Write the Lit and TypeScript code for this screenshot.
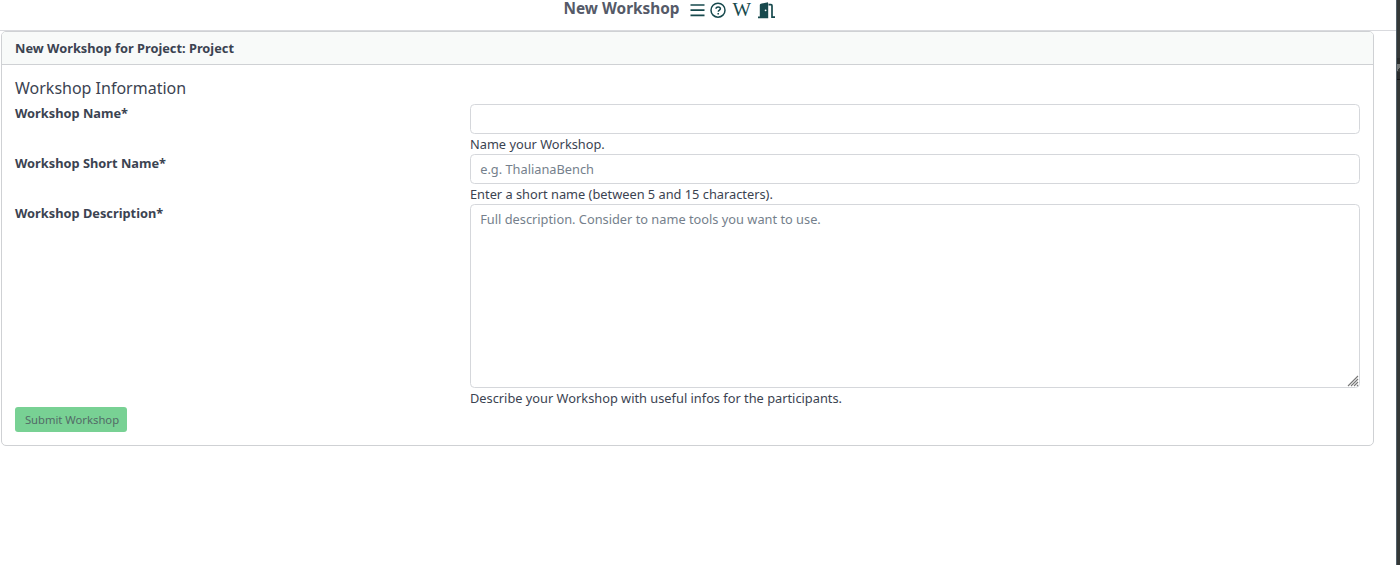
import { LitElement, html, css } from "lit";
import { customElement } from "lit/decorators.js";

@customElement("app-root")
export class AppRoot extends LitElement {
  static styles = css`
    :host { display: flex; height: 565px; overflow: hidden; background: #fff; color: #3b4351;
      font: 12.8px/20px "Noto Sans", sans-serif; }
    * { box-sizing: border-box; }
    main { flex: 1; min-width: 0; }
    .top { height: 31px; border-bottom: 1px solid #d9dade; display: flex; padding-left: 563.5px; }
    h1 { margin: -2px 0 0; font-size: 15.36px; line-height: 22px; font-weight: 700; color: #555a68; flex: 0 0 126.5px; white-space: nowrap; }
    .icons { color: #17494d; height: 20px; }
    .card { margin-left: 1px; width: 1373px; height: 415px; border: 1px solid #cfd1d4; border-radius: 5px; overflow: hidden; }
    .head { height: 33px; background: #f8faf9; border-bottom: 1px solid #cfd1d4; padding: 6px 13px; font-weight: 700; }
    .body { padding: 13px; }
    h2 { margin: 0; height: 26px; font-size: 16px; line-height: 20px; font-weight: 400; }
    .row { display: grid; grid-template-columns: 455px 890px; }
    label { font-weight: 700; line-height: 18px; }
    input, textarea { display: block; width: 100%; margin: 0; height: 30px; padding: 4px 9.2px; border: 1px solid #d5d7db; border-radius: 4.5px;
      font: inherit; color: inherit; background: #fff; outline: none; }
    textarea { height: 184px; resize: none; }
    .area { position: relative; }
    .grip { position: absolute; right: 1px; bottom: 1px; color: #777; }
    ::placeholder { color: #757f8c; opacity: 1; }
    .help { height: 20px; }
    button { display: block; height: 25px; width: 112px; margin: -1px 0 0; padding: 0 0 0 2px; border: 0; border-radius: 3px;
      background: #78d194; color: #536b67; font: 11.25px/25px "Noto Sans", sans-serif; }
    .edge { width: 4px; background: #343837; border-left: 1px solid #52606a; }
    .seam { height: 22px; margin-top: 58px; background: #292c2b; border-bottom: 1px solid #151717; padding-top: 6px; }
    .mark { height: 8px; width: 3px; background: linear-gradient(120deg, #777a79 60%, #353938 60%); }
    .w { font: 18.5px "Liberation Serif", serif; fill: currentColor; }
  `;

  private row(id: string, label: string, field: unknown, help: string) {
    return html`<div class="row"><label for=${id}>${label}</label>
      <div>${field}<div class="help">${help}</div></div></div>`;
  }

  render() {
    return html`
      <main>
        <header class="top">
          <h1>New Workshop</h1>
          <svg class="icons" width="86" height="20" viewBox="690 0 86 20" fill="none" stroke="currentColor" stroke-width="1.7">
            <path d="M690.5 5h14M690.5 10.2h14M690.5 15.4h14" />
            <circle cx="718" cy="10.2" r="7" stroke-width="1.5" />
            <path d="M716 8.8c0-2.5 4.4-2.5 4.4 0 0 1.5-2.1 1.3-2.1 3M718.2 13v1.4" stroke-width="1.5" />
            <text class="w" x="732.5" y="16" stroke="none" textLength="18.5" lengthAdjust="spacingAndGlyphs">W</text>
            <path d="M759.8 5q0-1 1-1.2l6.2-1.4q1.2-.2 1.2 1v14.8h-10.2v-1.8h1.8z" fill="currentColor" stroke="none" />
            <path d="M768.5 4.7h2.5q1 0 1 1v11.5h3" />
            <circle cx="765.6" cy="10.3" r="0.9" fill="#fff" stroke="none" />
          </svg>
        </header>
        <section class="card">
          <div class="head">New Workshop for Project: Project</div>
          <div class="body">
            <h2>Workshop Information</h2>
            ${this.row("name", "Workshop Name*", html`<input id="name" />`, "Name your Workshop.")}
            ${this.row("short", "Workshop Short Name*", html`<input id="short" placeholder="e.g. ThalianaBench" />`, "Enter a short name (between 5 and 15 characters).")}
            ${this.row("desc", "Workshop Description*", html`<div class="area">
              <textarea id="desc" placeholder="Full description. Consider to name tools you want to use."></textarea>
              <svg class="grip" width="12" height="12" fill="none" stroke="currentColor" stroke-width="1.1">
                <path d="M1 11L11 1M4 11L11 4M7 11L11 7M10 11L11 10" />
              </svg></div>`, "Describe your Workshop with useful infos for the participants.")}
            <button>Submit Workshop</button>
          </div>
        </section>
      </main>
      <div class="edge"><div class="seam"><div class="mark"></div></div></div>
    `;
  }
}
